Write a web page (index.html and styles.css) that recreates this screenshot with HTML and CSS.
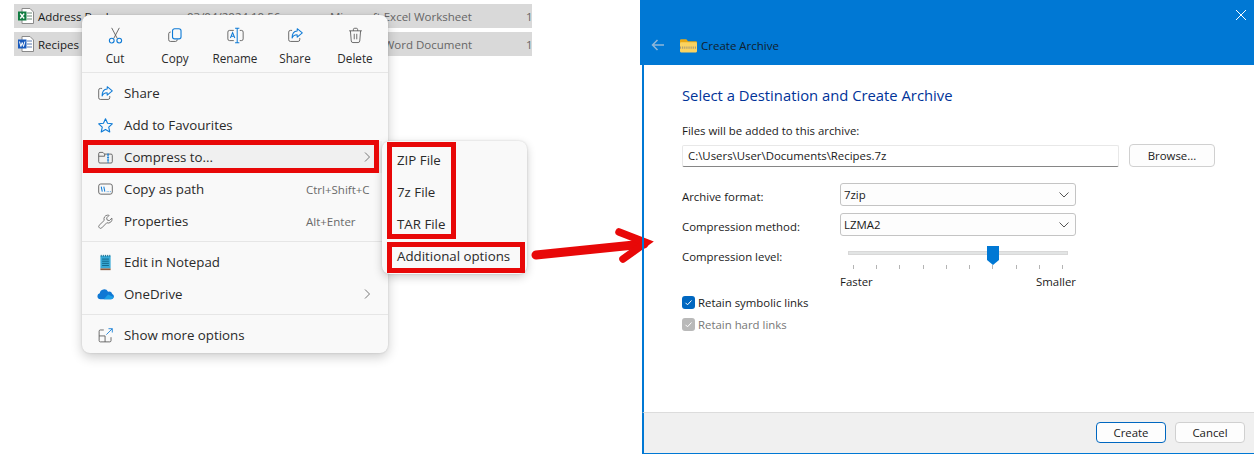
FILE: index.html
```html
<!DOCTYPE html>
<html lang="en">
<head>
<meta charset="utf-8">
<title>Create Archive</title>
<link rel="stylesheet" href="styles.css">
</head>
<body>
<main class="stage">
  <section class="files">
    <div class="file-row">
      <span class="file-name">
        <svg class="file-icon" viewBox="0 0 16 16"><path d="M4 .5h8l3.5 3.5v11.5H4z" fill="#fff" stroke="#8a8a8a"/><path d="M9 5h5M9 8h5M9 11h5" stroke="#6a8a78"/><rect y="3.5" width="8.5" height="9" fill="#107c41"/><path d="M2.2 5.5l4 5M6.2 5.5l-4 5" stroke="#fff" stroke-width="1.3"/></svg>
        Address Book</span>
      <span>03/04/2024 10:56</span><span>Microsoft Excel Worksheet</span><span>14 KB</span>
    </div>
    <div class="file-row">
      <span class="file-name">
        <svg class="file-icon" viewBox="0 0 16 16"><path d="M4 .5h8l3.5 3.5v11.5H4z" fill="#fff" stroke="#8a8a8a"/><path d="M9 5h5M9 8h5M9 11h5" stroke="#5a7ab0"/><rect y="3.5" width="8.5" height="9" fill="#185abd"/><path d="M1.5 5.5l1.4 5 1.3-4 1.3 4 1.4-5" stroke="#fff" fill="none"/></svg>
        Recipes</span>
      <span>03/04/2024 10:56</span><span>Microsoft Word Document</span><span>14 KB</span>
    </div>
  </section>

  <nav class="menu">
    <div class="actions">
      <div class="action">
        <svg class="icon" viewBox="0 0 20 20" fill="none"><path d="M5.500 1l6.600 12.500M14.500 1l-6.600 12.500" stroke="#555"/><circle cx="5.600" cy="16" r="2.800" stroke="#0f7bd6" stroke-width="1.300"/><circle cx="14.400" cy="16" r="2.800" stroke="#0f7bd6" stroke-width="1.300"/></svg>
        <span>Cut</span>
      </div>
      <div class="action">
        <svg class="icon" viewBox="0 0 20 20" fill="none"><path d="M4.500 6H4a2 2 0 0 0-2 2v7a2 2 0 0 0 2 2h6a2 2 0 0 0 2-2v-.5" stroke="#555"/><rect x="6.500" y="2" width="10" height="12" rx="2.500" stroke="#0f7bd6" stroke-width="1.300"/></svg>
        <span>Copy</span>
      </div>
      <div class="action">
        <svg class="icon" viewBox="0 0 20 20" fill="none"><path d="M8 4H3a2 2 0 0 0-2 2v8a2 2 0 0 0 2 2h5M15 4h2a2 2 0 0 1 2 2v8a2 2 0 0 1-2 2h-2" stroke="#555"/><path d="M9.500 1.500h5M9.500 18.500h5M12 1.500v17" stroke="#0f7bd6" stroke-width="1.200"/><path d="M4 13l2.600-6.500L9.200 13M5 11h3.400" stroke="#0f7bd6" stroke-width="1.200"/></svg>
        <span>Rename</span>
      </div>
      <div class="action">
        <svg class="icon" viewBox="0 0 20 20" fill="none"><path d="M6 4H4a2 2 0 0 0-2 2v9a2 2 0 0 0 2 2h9a2 2 0 0 0 2-2v-2" stroke="#555"/><path d="M12 2l6 5-6 5V9C9 9 7 10 6 13c0-5 2.500-8 6-8.200z" stroke="#0f7bd6" stroke-width="1.200" stroke-linejoin="round"/></svg>
        <span>Share</span>
      </div>
      <div class="action">
        <svg class="icon" viewBox="0 0 20 20" fill="none"><path d="M2.500 4.500h15M7.500 4.500V3a1.500 1.500 0 0 1 1.500-1.500h2A1.500 1.500 0 0 1 12.500 3v1.500M4 4.500l1 12a2 2 0 0 0 2 1.800h6a2 2 0 0 0 2-1.800l1-12M8.500 8v6.500M11.500 8v6.500" stroke="#555"/></svg>
        <span>Delete</span>
      </div>
    </div>
    <div class="menu-group">
      <div class="item">
        <svg class="icon" viewBox="0 0 20 20" fill="none"><path d="M6 4H4a2 2 0 0 0-2 2v9a2 2 0 0 0 2 2h9a2 2 0 0 0 2-2v-2" stroke="#555"/><path d="M12 2l6 5-6 5V9C9 9 7 10 6 13c0-5 2.500-8 6-8.200z" stroke="#0f7bd6" stroke-width="1.200" stroke-linejoin="round"/></svg>
        <span class="item-label">Share</span>
      </div>
      <div class="item">
        <svg class="icon" viewBox="0 0 20 20" fill="none"><path d="M10 2l2.400 5.300 5.600.7-4.200 3.900 1.200 5.700L10 14.700l-5 2.900 1.200-5.700L2 8l5.600-.7z" stroke="#0f7bd6" stroke-width="1.300" stroke-linejoin="round"/></svg>
        <span class="item-label">Add to Favourites</span>
      </div>
      <div class="item item-active">
        <svg class="icon" viewBox="0 0 20 20" fill="none"><path d="M2 15V5.500A1.500 1.500 0 0 1 3.500 4H7l2 2h7.500A1.500 1.500 0 0 1 18 7.500V15a1.500 1.500 0 0 1-1.500 1.500h-13A1.500 1.500 0 0 1 2 15zM2 8.500h7L9 6" stroke="#555"/><path d="M13 5v11.500M11.800 7h2.400M11.800 10h2.400M11.800 13h2.400" stroke="#0f7bd6"/></svg>
        <span class="item-label">Compress to...</span>
        <svg class="chevron" viewBox="0 0 8 12" fill="none"><path d="M2 1.500L6.500 6 2 10.500" stroke="#777"/></svg>
      </div>
      <div class="item">
        <svg class="icon" viewBox="0 0 20 20" fill="none"><rect x="2" y="3.500" width="16" height="12" rx="2.500" stroke="#555"/><path d="M5 6.500l1.200 6M8 6.500l1.200 6" stroke="#0f7bd6" stroke-width="1.200"/><path d="M11.500 12.500h.8M13.500 12.500h.8M15.500 12.500h.8" stroke="#0f7bd6"/></svg>
        <span class="item-label">Copy as path</span>
        <span class="shortcut">Ctrl+Shift+C</span>
      </div>
      <div class="item">
        <svg class="icon" viewBox="0 0 20 20" fill="none"><path d="M12.500 2.500a4.500 4.500 0 0 0-4 6.200L2.500 14.500a2 2 0 0 0 0 2.600l.4.400a2 2 0 0 0 2.700 0l5.900-6a4.500 4.500 0 0 0 6-5.500l-3 3-2.500-.7-.7-2.500 3-3a4.500 4.500 0 0 0-1.800-.3z" stroke="#666" stroke-linejoin="round"/></svg>
        <span class="item-label">Properties</span>
        <span class="shortcut">Alt+Enter</span>
      </div>
    </div>
    <div class="menu-group">
      <div class="item">
        <svg class="icon" viewBox="0 0 20 20"><rect x="4" y="2" width="12" height="15" fill="#38a9d6"/><path d="M6 6h8M6 8.500h8M6 11h8M6 13.500h8" stroke="#0d5f80"/><path d="M5 1v2M7.500 1v2M10 1v2M12.500 1v2M15 1v2" stroke="#0d5f80"/><rect x="4" y="17" width="12" height="2" fill="#8a5a3c"/></svg>
        <span class="item-label">Edit in Notepad</span>
      </div>
      <div class="item">
        <svg class="icon" viewBox="0 0 20 20"><path d="M4 15.500a3.500 3.500 0 0 1-.8-6.900 5.200 5.200 0 0 1 9.800-1.800 4.200 4.200 0 0 1 5 2.700 3.100 3.100 0 0 1 1.800 3.500 3 3 0 0 1-3 2.500z" fill="#0f78d4"/><path d="M8 15.500l5-5.400 6.500 2.700a3 3 0 0 1-2.700 2.700z" fill="#1e9fe6"/></svg>
        <span class="item-label">OneDrive</span>
        <svg class="chevron" viewBox="0 0 8 12" fill="none"><path d="M2 1.500L6.500 6 2 10.500" stroke="#777"/></svg>
      </div>
    </div>
    <div class="menu-group">
      <div class="item">
        <svg class="icon" viewBox="0 0 20 20" fill="none"><path d="M8 3.500H4A1.500 1.500 0 0 0 2.500 5v11A1.500 1.500 0 0 0 4 17.500h11a1.500 1.500 0 0 0 1.500-1.500v-4M2.500 10.500h7v7" stroke="#555"/><path d="M11 9l7-7M13.500 2H18v4.500" stroke="#0f7bd6"/></svg>
        <span class="item-label">Show more options</span>
      </div>
    </div>
  </nav>

  <nav class="submenu">
    <div class="sub-group">
      <div class="sub-item">ZIP File</div>
      <div class="sub-item">7z File</div>
      <div class="sub-item">TAR File</div>
    </div>
    <div class="sub-item sub-extra">Additional options</div>
  </nav>

  <div class="mark mark-compress"></div>
  <div class="mark mark-formats"></div>
  <div class="mark mark-additional"></div>

  <svg class="arrow" viewBox="0 0 130 40" fill="none"><path d="M8 31L116 20" stroke="#e80808" stroke-width="9" stroke-linecap="round"/><path d="M91 8L118 18.500 95 35" stroke="#e80808" stroke-width="7.500" stroke-linecap="round" stroke-linejoin="miter"/></svg>

  <section class="dialog">
    <header class="dialog-head">
      <svg class="close" viewBox="0 0 10 10" fill="none"><path d="M0 0l10 10M10 0L0 10" stroke="#fff"/></svg>
      <div class="head-row">
        <svg class="back" viewBox="0 0 14 12" fill="none"><path d="M13 6H1.500M6.500 1L1.500 6l5 5" stroke="#8fb7d9" stroke-width="1.500"/></svg>
        <svg class="folder" viewBox="0 0 16 14"><path d="M0 2a1 1 0 0 1 1-1h5l1.500 2H15a1 1 0 0 1 1 1v1H0z" fill="#e9a914"/><rect y="4" width="16" height="9.500" rx="1" fill="#fbd360"/><path d="M0 9h16" stroke="#a59a78" stroke-width="2" stroke-dasharray="1 1"/></svg>
        <span class="head-title">Create Archive</span>
      </div>
    </header>
    <div class="dialog-body">
      <h1 class="dialog-title">Select a Destination and Create Archive</h1>
      <p class="path-label">Files will be added to this archive:</p>
      <div class="path-row">
        <div class="path-input">C:\Users\User\Documents\Recipes.7z</div>
        <div class="btn btn-browse">Browse...</div>
      </div>
      <div class="form-row">
        <span class="form-label">Archive format:</span>
        <div class="select"><span>7zip</span><svg class="select-caret" viewBox="0 0 10 6" fill="none"><path d="M.5.500L5 5 9.500.500" stroke="#555"/></svg></div>
      </div>
      <div class="form-row form-row-next">
        <span class="form-label">Compression method:</span>
        <div class="select"><span>LZMA2</span><svg class="select-caret" viewBox="0 0 10 6" fill="none"><path d="M.5.500L5 5 9.500.500" stroke="#555"/></svg></div>
      </div>
      <div class="level-row">
        <span class="form-label level-label">Compression level:</span>
        <div class="slider">
          <div class="track">
            <svg class="thumb" viewBox="0 0 12 19"><path d="M0 0h12v14l-6 5-6-5z" fill="#0078d4"/></svg>
          </div>
          <div class="ticks"><i></i><i></i><i></i><i></i><i></i><i></i><i></i><i></i><i></i><i></i></div>
          <div class="scale"><span>Faster</span><span>Smaller</span></div>
        </div>
      </div>
      <div class="check">
        <span class="box"><svg viewBox="0 0 13 13" fill="none"><path d="M3.500 6.800l2 2 4-4.300" stroke="#fff"/></svg></span>
        <span>Retain symbolic links</span>
      </div>
      <div class="check check-off">
        <span class="box"><svg viewBox="0 0 13 13" fill="none"><path d="M3.500 6.800l2 2 4-4.300" stroke="#fff"/></svg></span>
        <span>Retain hard links</span>
      </div>
    </div>
    <footer class="dialog-foot">
      <div class="btn btn-primary">Create</div>
      <div class="btn btn-cancel">Cancel</div>
    </footer>
  </section>
</main>
</body>
</html>
```
FILE: styles.css
```css
* { box-sizing: border-box; }
html, body { margin: 0; padding: 0; }
body { background: #fff; color: #1a1a1a; font-family: "Open Sans", "Liberation Sans", sans-serif; }
.stage { position: relative; width: 1254px; height: 454px; overflow: hidden; }

.files { position: absolute; left: 14px; top: 4px; width: 518px; display: flex; flex-direction: column; gap: 4px; }
.file-row { height: 24px; background: #d9d9d9; display: grid; grid-template-columns: 173px 143px 196px 40px; align-items: center; font-size: 11.500px; color: #666; white-space: nowrap; overflow: hidden; }
.file-name { display: flex; align-items: center; gap: 4px; padding-left: 4px; color: #1a1a1a; font-size: 11.500px; }
.file-icon { width: 16px; height: 16px; flex: none; }

.menu { position: absolute; left: 82px; top: 15px; width: 306px; height: 338px; background: #f9f9f9; border-radius: 8px; box-shadow: 0 4px 12px rgba(0,0,0,.2), 0 0 2px rgba(0,0,0,.15); font-size: 13.300px; }
.actions { height: 58px; display: flex; padding-left: 3px; border-bottom: 1px solid #e6e6e6; }
.action { width: 60px; display: flex; flex-direction: column; align-items: center; padding-top: 12px; gap: 6px; font-size: 11.700px; line-height: 16px; color: #2a2a2a; }
.icon { width: 17px; height: 17px; flex: none; display: block; }
.menu-group { padding: 4px 0; border-bottom: 1px solid #e6e6e6; }
.menu-group:last-child { border-bottom: 0; }
.item { height: 32px; display: flex; align-items: center; padding: 0 12px 0 15px; margin: 0 6px 0 0; gap: 10px; color: #2a2a2a; }
.item-active { background: #f0f0f0; }
.item-label { flex: 1; }
.shortcut { font-size: 11.500px; color: #6a6a6a; width: 76px; }
.chevron { width: 8px; height: 12px; flex: none; margin-right: -1px; }
.item:has(.shortcut) { padding-right: 0; }

.submenu { position: absolute; left: 382px; top: 141px; width: 145px; height: 133px; background: #f9f9f9; border-radius: 8px; box-shadow: 0 3px 10px rgba(0,0,0,.2), 0 0 2px rgba(0,0,0,.15); font-size: 13.300px; padding-top: 3px; }
.sub-item { height: 32px; line-height: 32px; padding-left: 15px; color: #2a2a2a; }
.sub-group { display: flex; flex-direction: column; }

.mark { position: absolute; border: 5px solid #e80808; }
.mark-compress { left: 83px; top: 140px; width: 296px; height: 33px; }
.mark-formats { left: 387px; top: 142px; width: 69px; height: 97px; }
.mark-additional { left: 387px; top: 242px; width: 138px; height: 31px; }

.arrow { position: absolute; left: 528px; top: 224px; width: 130px; height: 40px; overflow: visible; }

.dialog { position: absolute; left: 640px; top: 0; width: 614px; height: 454px; display: flex; flex-direction: column; }
.dialog-head { height: 65px; background: #0078d4; flex: none; position: relative; display: flex; align-items: flex-end; padding: 0 0 11px 11px; }
.close { position: absolute; right: 8px; top: 10px; width: 10px; height: 10px; }
.head-row { display: flex; align-items: center; height: 18px; }
.back { width: 14px; height: 12px; margin-right: 15px; }
.folder { width: 17px; height: 15px; margin-right: 4px; }
.head-title { font-size: 11.500px; color: #10202e; }
.dialog-body { flex: 1; margin-left: 2px; border-left: 2px solid #0078d4; padding: 19px 0 0 38px; font-size: 11.400px; color: #1a1a1a; }
.dialog-title { margin: 0; font-size: 14.800px; font-weight: 400; line-height: 22px; color: #003399; }
.path-label { margin: 17px 0 0; line-height: 16px; }
.path-row { display: flex; gap: 10px; margin-top: 5px; }
.path-input { width: 437px; height: 22px; margin-top: 1px; background: #fff; border: 1px solid #e8e8e8; border-bottom-color: #868686; border-radius: 2px; line-height: 20px; padding-left: 5px; }
.btn { display: flex; align-items: center; justify-content: center; background: #fdfdfd; border: 1px solid #d0d0d0; border-radius: 4px; color: #1a1a1a; }
.btn-browse { width: 86px; height: 23px; }
.form-row { display: flex; align-items: center; margin-top: 16px; height: 23px; }
.form-row-next { margin-top: 7px; }
.form-label { width: 158px; flex: none; line-height: 16px; padding-top: 5px; }
.select { width: 236px; height: 23px; background: #fdfdfd; border: 1px solid #c4c4c4; border-radius: 3px; display: flex; align-items: center; justify-content: space-between; padding: 0 6px 0 3px; }
.select-caret { width: 10px; height: 6px; }
.level-row { display: flex; margin-top: 9px; }
.level-label { margin-top: 4px; padding-top: 0; }
.slider { width: 236px; }
.track { position: relative; margin: 6px 8px 0; height: 4px; background: #e2e4e4; border: 1px solid #d8d8d8; }
.thumb { position: absolute; left: 138px; top: -6px; width: 12px; height: 19px; }
.ticks { display: flex; justify-content: space-between; margin: 10px 13px 0; height: 4px; }
.ticks i { width: 1px; height: 4px; background: #b4b4b4; }
.scale { display: flex; justify-content: space-between; margin-top: 5px; line-height: 16px; }
.check { display: flex; align-items: center; gap: 3px; height: 16px; margin-top: 6px; }
.level-row + .check { margin-top: 4px; }
.box { width: 13px; height: 13px; border-radius: 3px; background: #0067c0; flex: none; display: flex; }
.box svg { width: 13px; height: 13px; }
.check-off { color: #777; }
.check-off .box { background: #b9b9b9; }
.dialog-foot { height: 42px; flex: none; margin-left: 2px; background: #f0f0f0; border-left: 2px solid #0078d4; border-top: 1px solid #dcdcdc; border-bottom: 1px solid #0078d4; display: flex; justify-content: flex-end; gap: 9px; padding: 9px 9px 0 0; font-size: 11.400px; }
.btn-primary, .btn-cancel { width: 70px; height: 21px; }
.btn-primary { border-color: #0067c0; }
```
